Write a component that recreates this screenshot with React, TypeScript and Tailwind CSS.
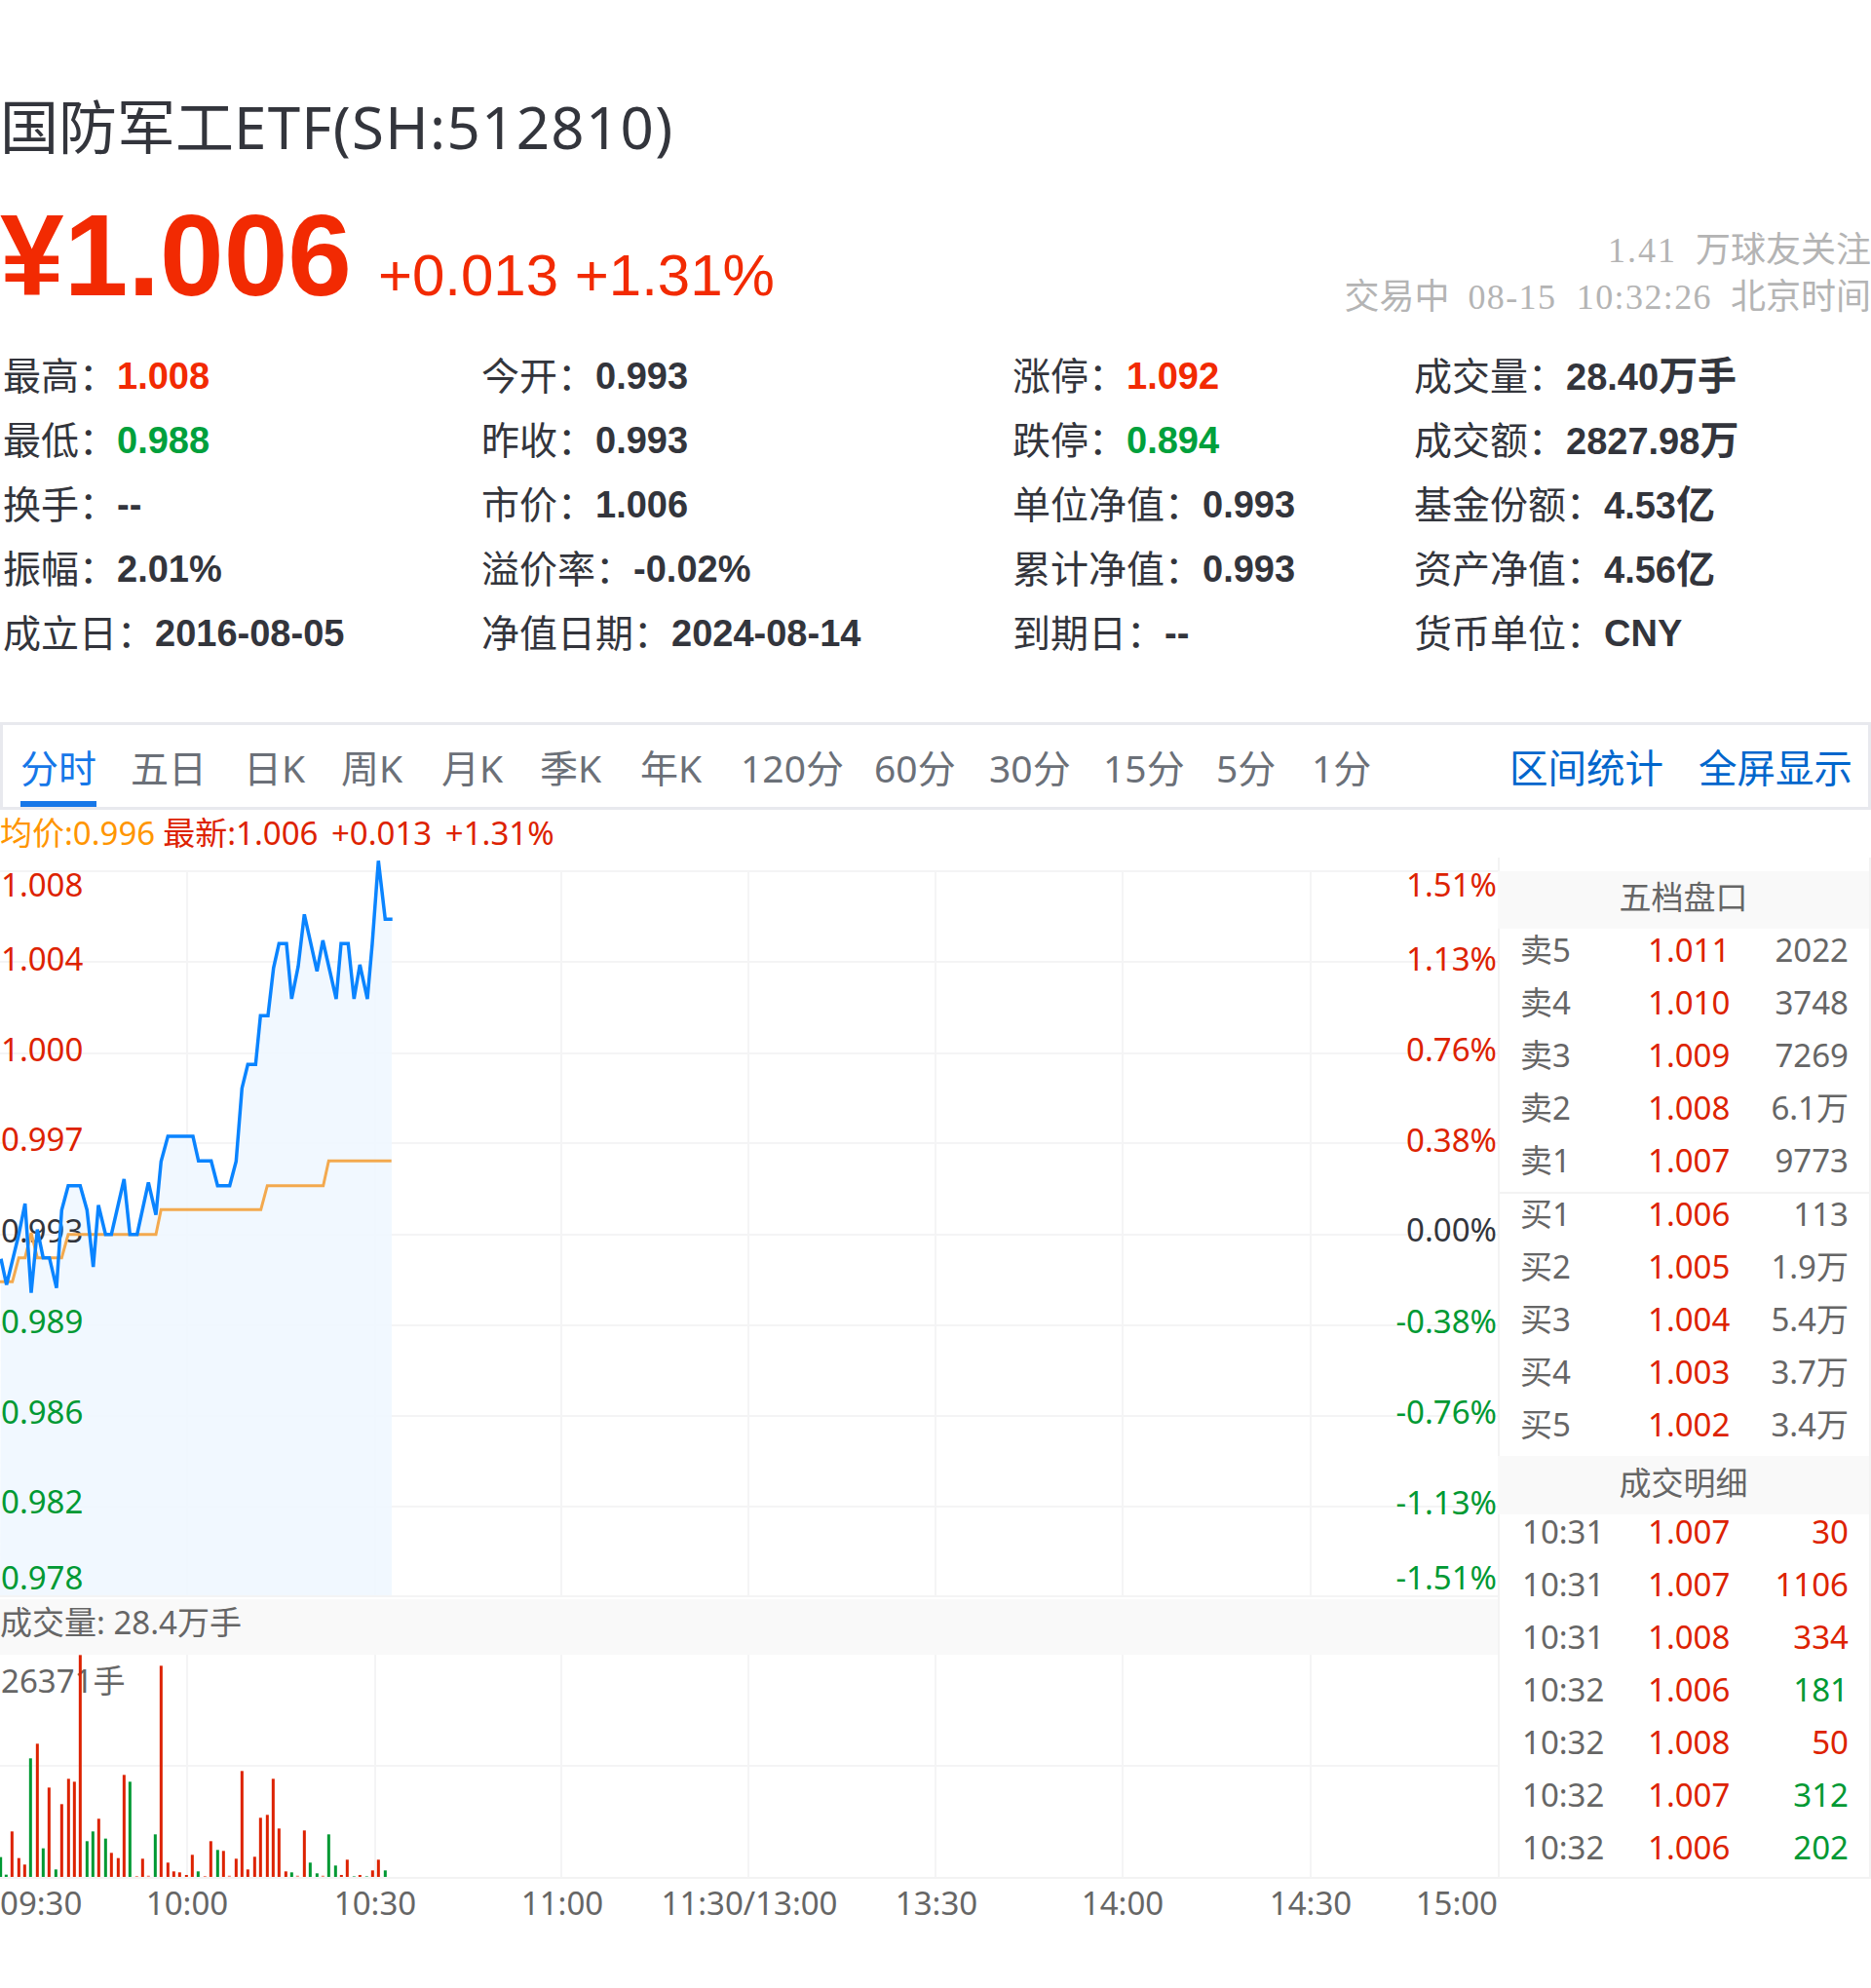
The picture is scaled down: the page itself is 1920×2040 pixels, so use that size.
import React from "react";

const RED = "#dd2200";
const GREEN = "#009933";
const DARK = "#33353c";
const GRAY = "#666666";

// [label, value, colour class]
const stats = [
  [
    ["最高", "1.008", "text-[#f22a02]"],
    ["最低", "0.988", "text-[#00a03c]"],
    ["换手", "--", "text-[#33353c]"],
    ["振幅", "2.01%", "text-[#33353c]"],
    ["成立日", "2016-08-05", "text-[#33353c]"],
  ],
  [
    ["今开", "0.993", "text-[#33353c]"],
    ["昨收", "0.993", "text-[#33353c]"],
    ["市价", "1.006", "text-[#33353c]"],
    ["溢价率", "-0.02%", "text-[#33353c]"],
    ["净值日期", "2024-08-14", "text-[#33353c]"],
  ],
  [
    ["涨停", "1.092", "text-[#f22a02]"],
    ["跌停", "0.894", "text-[#00a03c]"],
    ["单位净值", "0.993", "text-[#33353c]"],
    ["累计净值", "0.993", "text-[#33353c]"],
    ["到期日", "--", "text-[#33353c]"],
  ],
  [
    ["成交量", "28.40", "text-[#33353c]", "万手"],
    ["成交额", "2827.98", "text-[#33353c]", "万"],
    ["基金份额", "4.53", "text-[#33353c]", "亿"],
    ["资产净值", "4.56", "text-[#33353c]", "亿"],
    ["货币单位", "CNY", "text-[#33353c]"],
  ],
];

const tabs = [
  ["五日", "w-[116px]"],
  ["日K", "w-[100px]"],
  ["周K", "w-[103px]"],
  ["月K", "w-[101px]"],
  ["季K", "w-[103px]"],
  ["年K", "w-[103px]"],
  ["120分", "w-[137px]"],
  ["60分", "w-[118px]"],
  ["30分", "w-[117px]"],
  ["15分", "w-[116px]"],
  ["5分", "w-[98px]"],
  ["1分", "w-[60px]"],
];

const sells = [
  ["卖5", "1.011", "2022"],
  ["卖4", "1.010", "3748"],
  ["卖3", "1.009", "7269"],
  ["卖2", "1.008", "6.1万"],
  ["卖1", "1.007", "9773"],
];
const buys = [
  ["买1", "1.006", "113"],
  ["买2", "1.005", "1.9万"],
  ["买3", "1.004", "5.4万"],
  ["买4", "1.003", "3.7万"],
  ["买5", "1.002", "3.4万"],
];
const deals = [
  ["10:31", "1.007", "30", "text-[#dd2200]"],
  ["10:31", "1.007", "1106", "text-[#dd2200]"],
  ["10:31", "1.008", "334", "text-[#dd2200]"],
  ["10:32", "1.006", "181", "text-[#009933]"],
  ["10:32", "1.008", "50", "text-[#dd2200]"],
  ["10:32", "1.007", "312", "text-[#009933]"],
  ["10:32", "1.006", "202", "text-[#009933]"],
];

const yLeft: [string, number, string][] = [
  ["1.008", 907, RED],
  ["1.004", 983, RED],
  ["1.000", 1076, RED],
  ["0.997", 1168, RED],
  ["0.993", 1262, DARK],
  ["0.989", 1355, GREEN],
  ["0.986", 1448, GREEN],
  ["0.982", 1540, GREEN],
  ["0.978", 1618, GREEN],
];
const yRight: [string, number, string][] = [
  ["1.51%", 907, RED],
  ["1.13%", 983, RED],
  ["0.76%", 1076, RED],
  ["0.38%", 1169, RED],
  ["0.00%", 1261, DARK],
  ["-0.38%", 1355, GREEN],
  ["-0.76%", 1448, GREEN],
  ["-1.13%", 1541, GREEN],
  ["-1.51%", 1618, GREEN],
];

// traced at 3x, origin (0, 870)
const priceRaw = [
  [3, 1265], [20, 1345], [58, 1190], [77, 1095], [96, 1370], [115, 1175], [133, 1262], [152, 1262], [174, 1355],
  [190, 1115], [210, 1040], [247, 1040], [268, 1115], [287, 1290], [303, 1100], [325, 1190], [343, 1190], [382, 1020],
  [400, 1190], [422, 1190], [457, 1030], [480, 1130], [496, 965], [517, 888], [594, 888], [611, 964], [650, 964],
  [670, 1040], [707, 1040], [727, 965], [745, 740], [763, 667], [787, 667], [802, 517], [825, 517], [842, 370],
  [859, 295], [882, 295], [898, 465], [918, 365], [937, 205], [976, 380], [994, 285], [1035, 465], [1050, 295],
  [1072, 295], [1090, 465], [1108, 360], [1131, 465], [1146, 295], [1165, 40], [1186, 220], [1208, 220],
];
const avgRaw = [
  [0, 1336], [38, 1336], [58, 1262], [77, 1262], [96, 1185], [115, 1262], [190, 1262], [210, 1190], [480, 1190],
  [496, 1114], [803, 1114], [823, 1040], [995, 1040], [1012, 964], [1205, 964],
];
const toPts = (raw: number[][]) => raw.map(([x, y]) => `${(x / 3).toFixed(1)},${(870 + y / 3).toFixed(1)}`).join(" ");
const pricePts = toPts(priceRaw);
const avgPts = toPts(avgRaw);
const fillPts = `0,1637 1,${(870 + 1265 / 3).toFixed(1)} ${pricePts} 402,${(870 + 220 / 3).toFixed(1)} 402,1637`;

// traced at 3x, origin (0, 1620): x, top, kind (r, g, light r, light g)
const bars: [number, number, string][] = [
  [2, 857, "g"], [19, 911, "g"], [37, 778, "r"], [58, 860, "r"], [76, 880, "r"], [94, 553, "g"], [115, 508, "r"],
  [133, 830, "g"], [151, 643, "r"], [172, 895, "g"], [190, 694, "r"], [211, 616, "r"], [229, 625, "r"], [247, 235, "r"],
  [268, 808, "g"], [286, 778, "g"], [304, 739, "r"], [325, 800, "g"], [343, 844, "r"], [364, 860, "r"], [382, 604, "r"],
  [400, 625, "g"], [421, 915, "lr"], [439, 862, "r"], [457, 914, "lr"], [478, 787, "g"], [496, 268, "r"], [517, 874, "r"],
  [535, 901, "r"], [553, 904, "r"], [574, 912, "r"], [592, 850, "r"], [610, 901, "g"], [631, 915, "lr"], [649, 808, "r"],
  [670, 835, "g"], [688, 838, "r"], [706, 914, "lr"], [727, 862, "r"], [745, 592, "r"], [763, 895, "r"], [784, 856, "r"],
  [802, 736, "r"], [823, 727, "r"], [841, 616, "r"], [859, 769, "r"], [880, 901, "r"], [898, 904, "g"], [916, 914, "lr"],
  [937, 775, "r"], [955, 874, "g"], [976, 907, "g"], [994, 914, "lr"], [1012, 787, "g"], [1033, 883, "g"], [1051, 912, "r"],
  [1069, 865, "r"], [1090, 915, "lg"], [1108, 912, "r"], [1129, 915, "lg"], [1147, 898, "r"], [1165, 865, "r"], [1186, 898, "g"],
];
const barFill: Record<string, string> = { r: "#dd2200", g: "#009933", lr: "#ee8877", lg: "#77c499" };

const gridY = [894, 987, 1081, 1173, 1267, 1360, 1453, 1546, 1638];
const gridX = [192, 385, 576, 768, 960, 1152, 1345];

const times: [string, number, "start" | "middle" | "end"][] = [
  ["09:30", 0, "start"],
  ["10:00", 192, "middle"],
  ["10:30", 385, "middle"],
  ["11:00", 577, "middle"],
  ["11:30/13:00", 769, "middle"],
  ["13:30", 961, "middle"],
  ["14:00", 1152, "middle"],
  ["14:30", 1345, "middle"],
  ["15:00", 1537, "end"],
];

function Row({ a, b, c }: { a: string; b: string; c: string }) {
  return (
    <div className="grid grid-cols-[131px_1fr_auto] items-center h-[44px]">
      <span className="text-[#666666]">{a}</span>
      <span className="text-[#dd2200]">{b}</span>
      <span className="text-[#666666]">{c}</span>
    </div>
  );
}

export default function App() {
  return (
    <div className="w-[1920px] h-[2040px] bg-white overflow-hidden font-['Noto_Sans','Noto_Sans_CJK_SC',sans-serif]">
      <h1 className="pt-[100px] text-[60px] leading-[60px] text-[#33353c] whitespace-nowrap">
        国防军工<span className="tracking-[1.3px]">ETF(SH:512810)</span>
      </h1>

      <div className="mt-[52px] h-[116px] flex justify-between items-start">
        <div className="flex items-baseline font-['Liberation_Sans',sans-serif] text-[#f22a02]">
          <span className="text-[118px] leading-[100px] font-bold">¥1.006</span>
          <span className="ml-[27px] text-[60px] leading-[100px]">+0.013 +1.31%</span>
        </div>
        <div className="mt-[21px] text-right text-[36px] leading-[48px] text-[#b4b4b4] font-['Liberation_Serif','Noto_Sans_CJK_SC',serif]">
          <div><span className="tracking-[2px]">1.41</span> <span className="ml-[10px]">万球友关注</span></div>
          <div className="[word-spacing:10px]">交易中 <span className="tracking-[1.4px]">08-15 10:32:26</span> 北京时间</div>
        </div>
      </div>

      <div className="mt-[24px] pl-[3px] grid grid-cols-[491px_545px_412px_1fr] text-[39px]">
        {stats.map((col, i) => (
          <div key={i}>
            {col.map(([label, value, cls, unit]) => (
              <div key={label} className="h-[66px] flex items-center text-[#33353c] whitespace-nowrap">
                <span>{label}：</span>
                <span className={"pt-[2px] font-bold text-[38px] font-['Liberation_Sans','Noto_Sans_CJK_SC',sans-serif] " + cls}>
                  {value}
                  {unit && <span className="text-[40px]">{unit}</span>}
                </span>
              </div>
            ))}
          </div>
        ))}
      </div>

      <div className="mt-[59px] h-[90px] border-[3px] border-[#e8e9ee] flex items-stretch pl-[18px] pr-[16px] text-[39px] text-[#6b7078] whitespace-nowrap">
        <div className="flex items-center pt-[11px] border-b-[6px] border-[#1677e8] text-[#1677e8]">分时</div>
        <div className="ml-[35px] flex items-stretch">
          {tabs.map(([t, w]) => (
            <div key={t} className={"flex items-center pt-[11px] border-b-[6px] border-transparent " + w}>{t}</div>
          ))}
        </div>
        <div className="ml-auto flex items-center gap-[36px] pt-[5px] text-[39.5px] text-[#0066cc]">
          <span>区间统计</span>
          <span>全屏显示</span>
        </div>
      </div>

      <div className="h-[49px] pb-[2px] flex items-center gap-[8px] text-[33px] whitespace-nowrap">
        <span className="text-[#ff9500]">均价:0.996</span>
        <span className="text-[#dd2200] [word-spacing:5px]">最新:1.006 +0.013 +1.31%</span>
      </div>

      <div className="flex h-[1048px] border-b-2 border-[#f3f3f3]">
        <div className="w-[1537px] shrink-0">
          <svg viewBox="0 880 1537 760" className="block w-[1537px] h-[760px] overflow-visible">
            {gridY.map((y) => (
              <line key={y} x1="0" x2="1537" y1={y} y2={y} stroke="#f4f4f5" strokeWidth="2" />
            ))}
            {gridX.map((x) => (
              <line key={x} x1={x} x2={x} y1="894" y2="1638" stroke="#f4f4f5" strokeWidth="2" />
            ))}
            <polygon points={fillPts} fill="#f0f7ff" fillOpacity="0.9" />
            {yLeft.map(([t, y, c]) => (
              <text key={t} x="1" y={y} dominantBaseline="central" fill={c} className="text-[33px]">{t}</text>
            ))}
            {yRight.map(([t, y, c]) => (
              <text key={t} x="1536" y={y} textAnchor="end" dominantBaseline="central" fill={c} className="text-[33px]">{t}</text>
            ))}
            <polyline points={avgPts} fill="none" stroke="#f3a94e" strokeWidth="3" />
            <polyline points={pricePts} fill="none" stroke="#0a84ff" strokeWidth="3.5" />
          </svg>
          <div className="mt-[1px] h-[57px] pb-[10px] bg-[#f9f9f9] flex items-center text-[33px] text-[#666666]">成交量: 28.4万手</div>
          <svg viewBox="0 1698 1537 230" className="block w-[1537px] h-[230px]">
            <line x1="0" x2="1537" y1="1812" y2="1812" stroke="#f4f4f5" strokeWidth="2" />
            {gridX.map((x) => (
              <line key={x} x1={x} x2={x} y1="1698" y2="1926" stroke="#f4f4f5" strokeWidth="2" />
            ))}
            <text x="1" y="1724" dominantBaseline="central" fill={GRAY} className="text-[33px]">26371手</text>
            {bars.map(([x, top, kind]) => (
              <rect key={x} x={x / 3 - 1.5} y={1620 + top / 3} width="3" height={1926 - (1620 + top / 3)} fill={barFill[kind]} />
            ))}
          </svg>
        </div>

        <div className="flex-1 pt-[14px] border-x-2 border-[#f3f3f3] text-[33px]">
          <div className="-ml-[2px] h-[59px] pb-[5px] bg-[#f9f9f9] flex items-center justify-center text-[#666666]">五档盘口</div>
          <div className="-mt-[3px] pl-[21px] pr-[21px] flex flex-col gap-[10px]">
            {sells.map(([a, b, c]) => <Row key={a} a={a} b={b} c={c} />)}
          </div>
          <div className="mt-[13px] border-t-2 border-[#f3f3f3]" />
          <div className="-mt-[4px] pl-[21px] pr-[21px] flex flex-col gap-[10px]">
            {buys.map(([a, b, c]) => <Row key={a} a={a} b={b} c={c} />)}
          </div>
          <div className="-ml-[2px] mt-[13px] h-[60px] pb-[5px] bg-[#f9f9f9] flex items-center justify-center text-[#666666]">成交明细</div>
          <div className="-mt-[7px] pl-[23px] pr-[21px] flex flex-col gap-[20px]">
            {deals.map(([a, b, c, cls], i) => (
              <div key={i} className="grid grid-cols-[129px_1fr_auto] items-center h-[34px]">
                <span className="text-[#666666]">{a}</span>
                <span className="text-[#dd2200]">{b}</span>
                <span className={cls}>{c}</span>
              </div>
            ))}
          </div>
        </div>
      </div>

      <svg viewBox="0 1928 1920 50" className="block w-[1920px] h-[50px]">
        {times.map(([t, x, anchor]) => (
          <text key={t} x={x} y="1952" textAnchor={anchor} dominantBaseline="central" fill={GRAY} className="text-[33px]">{t}</text>
        ))}
      </svg>
    </div>
  );
}
